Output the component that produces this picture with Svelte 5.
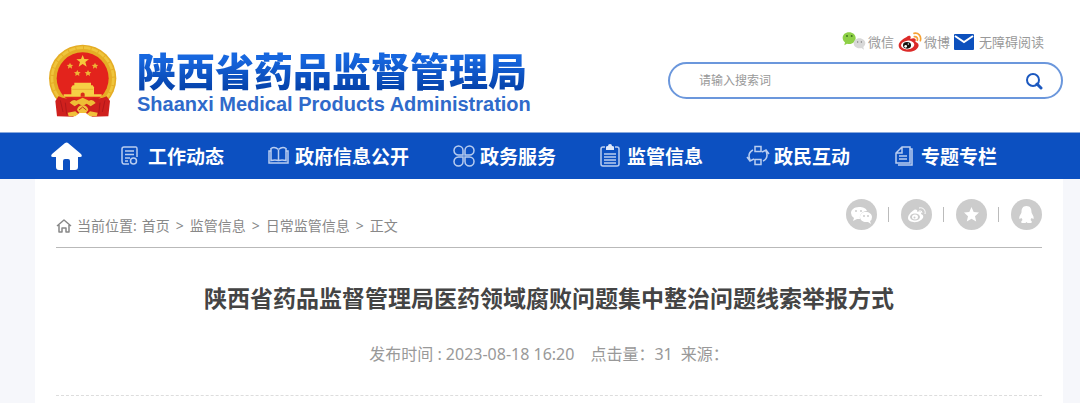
<script>
	let keyword = $state('');

	const nav_list = [
		{ label: '工作动态', icon: 'doc' },
		{ label: '政府信息公开', icon: 'book' },
		{ label: '政务服务', icon: 'clover' },
		{ label: '监管信息', icon: 'clipboard' },
		{ label: '政民互动', icon: 'exchange' },
		{ label: '专题专栏', icon: 'pages' }
	];

	const crumb_list = ['首页', '监管信息', '日常监管信息', '正文'];

	const share_list = [
		{ label: '分享到微信', icon: 'wechat' },
		{ label: '分享到微博', icon: 'weibo' },
		{ label: '收藏', icon: 'star' },
		{ label: '分享到QQ', icon: 'qq' }
	];
</script>

<header class="site_head">
	<a class="brand" href="/">
		<svg class="emblem" viewBox="24 24 210 222" aria-hidden="true">
			<circle cx="128" cy="130" r="101" fill="#e5ad25" />
			<circle cx="128" cy="130" r="92" fill="none" stroke="#efc53c" stroke-width="8" stroke-dasharray="20 3" />
			<circle cx="128" cy="130" r="78" fill="#e3231c" />
			<path d="M128 60l5 12 14 1-11 8 4 14-12-8-12 8 4-14-11-8 14-1z" fill="#f5c83b" />
			<g fill="#eeb436">
				<path id="star" d="M90 83l3 6 7 1-5 4 1 7-6-4-6 4 1-7-5-4 7-1z" />
				<use href="#star" x="75" />
				<use href="#star" x="22" y="22" />
				<use href="#star" x="54" y="22" />
			</g>
			<path d="M103 143h50v8h-50zM98 151h60l5 7H93zM94 158h68v20H94zM71 178h114v7H71z" fill="#f6cf45" />
			<path d="M97 163h62" stroke="#e4a12a" stroke-width="2" />
			<path d="M122 185v-9q6-7 12 0v9z" fill="#d82b1b" />
			<path d="M56 184q18 10 38 4l34 12 34-12q20 6 38-4l10 14-5 46-48 1-29-16-29 16-48-1-5-46z" fill="#cf201d" />
			<path d="M61 196l8 35M76 203l4 35M195 196l-8 35M180 203l-4 35" stroke="#b1171a" stroke-width="3" />
			<path d="M89 203q10-12 20-6l19-9 19 9q11-6 20 7l-15 10-12-8-12 7-12-7-12 8z" fill="#eebc35" />
			<path d="M111 225q3-14 17-14t17 14l-7 9h-20zM83 233l23-4 9 8-9 7H86zM173 233l-23-4-9 8 9 7h20z" fill="#f1c03b" />
			<path d="M117 225l11-9 11 9" fill="none" stroke="#c33320" stroke-width="3" />
		</svg>
		<span class="brand_text">
			<span class="brand_cn">陕西省药品监督管理局</span>
			<span class="brand_en">Shaanxi Medical Products Administration</span>
		</span>
	</a>

	<div class="head_tools">
		<div class="quick_links">
			<a href="#wechat">
				<svg width="24" height="20" viewBox="22 19 72 60" aria-hidden="true">
					<path d="M43 20c-11 0-19 7-19 17 0 5 3 10 7 13l-2 9 8-5q3 1 7 1c11 0 19-8 19-18s-9-17-20-17z" fill="#8ed047" />
					<path d="M74 38c-10 0-17 7-17 15s7 15 17 15q3 0 6-1l8 5-2-8q6-4 6-11c0-8-8-15-18-15z" fill="#d8d8d8" />
					<circle cx="37" cy="31" r="3" fill="#3e751d" />
					<circle cx="51" cy="31" r="3" fill="#3e751d" />
					<circle cx="69" cy="49" r="2" fill="#777" />
					<circle cx="80" cy="49" r="2" fill="#777" />
				</svg>
				<span>微信</span>
			</a>
			<a href="#weibo">
				<svg width="24" height="20" viewBox="190 18 72 60" aria-hidden="true">
					<path d="M216 33c5-5 13-5 12 2l-1 4c9-4 18-3 16 5l-1 3c8 3 12 8 9 15-4 10-18 16-32 15-17-1-28-9-27-20 1-9 13-19 24-24z" fill="#dc2b29" />
					<ellipse cx="219" cy="57" rx="20" ry="13" fill="#fff" transform="rotate(-7 219 57)" />
					<ellipse cx="217" cy="58" rx="12" ry="10" fill="#17120f" />
					<circle cx="213" cy="61" r="4" fill="#fff" />
					<circle cx="221" cy="54" r="2" fill="#fff" />
					<path d="M238 22c13-3 23 8 19 22M239 32c7-1 11 5 9 11" fill="none" stroke="#f6a135" stroke-width="5" stroke-linecap="round" />
				</svg>
				<span>微博</span>
			</a>
			<a class="link_mail" href="#accessible">
				<svg width="20" height="16" viewBox="0 0 20 16" aria-hidden="true">
					<rect width="20" height="16" rx="1" fill="#0c50bd" />
					<path d="M1 2l9 6 9-6" fill="none" stroke="#fff" stroke-width="2" />
				</svg>
				<span>无障碍阅读</span>
			</a>
		</div>

		<form class="search" role="search" onsubmit={(e) => e.preventDefault()}>
			<input type="text" aria-label="搜索" placeholder="请输入搜索词" bind:value={keyword} />
			<button type="submit" aria-label="搜索">
				<svg width="18" height="18" viewBox="0 0 18 18" aria-hidden="true">
					<circle cx="8" cy="8" r="6" fill="none" stroke="#1b58bf" stroke-width="2" />
					<path d="M12 12l4 4" stroke="#1b58bf" stroke-width="3" stroke-linecap="round" />
				</svg>
			</button>
		</form>
	</div>
</header>

<nav class="main_nav">
	<a class="nav_home" href="/" aria-label="首页">
		<svg width="31" height="28" viewBox="0 0 31 28" aria-hidden="true">
			<path d="M14 1q2-1 3 0l13 11q2 3-1 3h-2v10q0 3-3 3h-5v-9q0-2-2-2h-3q-2 0-2 2v9H8q-3 0-3-3V15H2q-3 0-1-3z" fill="#fff" />
		</svg>
	</a>
	{#each nav_list as nav_item (nav_item.label)}
		<a class="nav_item" href="#{nav_item.icon}">
			<svg width="22" height="24" viewBox="0 0 22 24" aria-hidden="true">
				{#if nav_item.icon === 'doc'}
					<path d="M9 20H4q-2 0-2-3V5q0-2 2-2h12q1 0 1 2v8M5 7h9M5 10.500h9M5 14h5M5 17h3" />
					<circle cx="13.500" cy="17" r="3" />
				{:else if nav_item.icon === 'book'}
					<path d="M11.500 6v10M11.500 5.500Q7.500 2 4 4.500v12q4-1 7.500 0 3.500-1 7.500 0v-12q-3.500-2.500-7.500 1M4 7H2v12h19V7h-2M8 19h7" />
				{:else if nav_item.icon === 'clover'}
					<path d="M11 11H6.500A4.500 4.500 0 1 1 11 6.500zM13 11h4.500A4.500 4.500 0 1 0 13 6.500zM11 13H6.500a4.500 4.500 0 1 0 4.500 4.500zM13 13h4.500a4.500 4.500 0 1 1-4.500 4.500z" />
				{:else if nav_item.icon === 'clipboard'}
					<path d="M6 3H4Q2 3 2 5v15q0 2 2 2h14q2 0 2-2V5q0-2-2-2h-2M5 10h12M5 13h12M5 16h12M5 19h12" />
					<path class="solid" d="M7 6V3q0-1 2-1 0-2 2-2t2 2q2 0 2 1v3z" />
				{:else if nav_item.icon === 'exchange'}
					<path d="M9 2.500h6v5H9zM9 15.500h6v5H9zM7 6q-6 3-3 10M1 13l3 4 4-2M17 17q6-3 3-10M23 10l-3-4-4 2" />
				{:else}
					<path d="M9 3h8v16H3V9zM9 3v6H3M6 12h8M6 15h8M17 5h2v16H5" />
				{/if}
			</svg>
			<span>{nav_item.label}</span>
		</a>
	{/each}
</nav>

<main class="article">
	<div class="article_bar">
		<div class="crumbs">
			<svg width="16" height="16" viewBox="0 0 16 16" aria-hidden="true">
				<path d="M1 8l7-6 7 6M3 7v7h3v-4h4v4h3V7" fill="none" stroke="#888" stroke-width="1.500" stroke-linejoin="round" />
			</svg>
			<span>当前位置:</span>
			{#each crumb_list as crumb, i (crumb)}
				{#if i > 0}<span class="crumb_sep">&gt;</span>{/if}
				<a href="#crumb-{i}">{crumb}</a>
			{/each}
		</div>

		<div class="share">
			{#each share_list as share_item (share_item.icon)}
				<button type="button" aria-label={share_item.label}>
					<svg width="31" height="31" viewBox="0 0 31 31" aria-hidden="true">
						{#if share_item.icon === 'wechat'}
							<path d="M13 8c-5 0-8 3-8 6q0 3 3 5l-1 3 4-2h3c-1-5 3-8 7-8-1-3-4-4-8-4z" />
							<path d="M20 13c-4 0-6 2-6 5s3 5 6 5h2l3 2-1-3q2-1 2-4c0-3-3-5-6-5z" />
							<g class="dot"><circle cx="10" cy="12" r="1" /><circle cx="15" cy="12" r="1" /><circle cx="18" cy="17" r="1" /><circle cx="22" cy="17" r="1" /></g>
						{:else if share_item.icon === 'weibo'}
							<path d="M13 11c2-1 4 0 3 2 3-1 5 0 4 2 3 1 3 4 0 6-5 4-13 2-13-2 0-3 3-6 6-8z" />
							<ellipse class="dot" cx="14" cy="18" rx="5" ry="3.500" />
							<ellipse cx="14" cy="18" rx="3" ry="2.500" />
							<circle class="dot" cx="13.500" cy="18.500" r="1" />
							<path class="wave" d="M18 9c4-1 7 2 6 6M18 12q3-1 3 2" />
						{:else if share_item.icon === 'star'}
							<path d="M15.500 8l2.200 5 5.300.500-4 3.700 1.200 5.300-4.700-2.800-4.700 2.800 1.200-5.300-4-3.700 5.300-.500z" />
						{:else}
							<path d="M15.500 7c-4 0-5 3-5 6 0 2-3 4-2 7l2-1 1 2q-2 1-1 3h4l1-1 1 1h4q1-2-1-3l1-2 2 1c1-3-2-5-2-7 0-3-1-6-5-6z" />
						{/if}
					</svg>
				</button>
			{/each}
		</div>
	</div>

	<h1>陕西省药品监督管理局医药领域腐败问题集中整治问题线索举报方式</h1>
	<p class="meta">
		<span>发布时间 : 2023-08-18 16:20</span>
		<span>点击量：31</span>
		<span>来源：</span>
	</p>
</main>

<style>
	:global(body) {
		margin: 0;
		background: #f6f7fb;
		font-family: 'Noto Sans', 'Noto Sans CJK SC', sans-serif;
	}

	a {
		color: inherit;
		text-decoration: none;
	}

	button {
		padding: 0;
		border: 0;
		background: none;
		cursor: pointer;
	}

	svg {
		display: block;
		flex: none;
	}

	.site_head {
		display: flex;
		justify-content: space-between;
		align-items: flex-start;
		padding: 32px 17px 15px 48px;
		background: #fff;
	}

	.brand {
		display: flex;
		gap: 19px;
		padding-top: 11px;
	}

	.emblem {
		width: 70px;
		height: 74px;
	}

	.brand_text {
		display: flex;
		flex-direction: column;
		padding-top: 9px;
		white-space: nowrap;
	}

	.brand_cn {
		font-family: 'Liberation Sans', 'Noto Sans CJK SC', sans-serif;
		font-size: 39px;
		font-weight: 900;
		line-height: 42px;
		background: linear-gradient(#1767df 15%, #0644ad 85%);
		background-clip: text;
		color: transparent;
	}

	.brand_en {
		font-family: 'Liberation Sans', Arial, sans-serif;
		font-size: 20px;
		font-weight: 700;
		line-height: 20px;
		color: #2f6aca;
	}

	.head_tools {
		width: 395px;
	}

	.quick_links {
		display: flex;
		justify-content: flex-end;
		gap: 4px;
		padding-right: 19px;
		margin-bottom: 10px;
		font-size: 13px;
		line-height: 20px;
		color: #999;
	}

	.quick_links a {
		display: flex;
		align-items: center;
		gap: 2px;
	}

	.quick_links .link_mail {
		gap: 5px;
	}

	.search {
		display: flex;
		align-items: center;
		box-sizing: border-box;
		height: 37px;
		padding: 0 18px 0 29px;
		border: 2px solid #6b97dc;
		border-radius: 19px;
	}

	.search input {
		flex: 1;
		min-width: 0;
		padding: 0;
		border: 0;
		outline: 0;
		background: none;
		font: inherit;
		font-size: 12px;
	}

	.search input::placeholder {
		color: #999;
	}

	.main_nav {
		display: flex;
		align-items: center;
		height: 46px;
		padding-left: 51px;
		border-top: 1px solid #89a9dd;
		background: #0c50c1;
		color: #fff;
		font-size: 19px;
		font-weight: 700;
		white-space: nowrap;
	}

	.nav_home {
		margin-right: 38px;
	}

	.nav_item {
		display: flex;
		align-items: center;
		gap: 6px;
		margin-right: 43px;
	}

	.nav_item svg {
		overflow: visible;
	}

	.nav_item path,
	.nav_item circle {
		fill: none;
		stroke: #b9cdf0;
		stroke-width: 1.5;
	}

	.nav_item .solid {
		fill: #dfe9fa;
		stroke: none;
	}

	.article {
		margin: 0 17px 0 35px;
		padding: 0 21px 7px;
		background: #fff;
	}

	.article_bar {
		display: flex;
		justify-content: space-between;
		align-items: flex-start;
		border-bottom: 1px solid #b9b9b9;
	}

	.crumbs {
		display: flex;
		align-items: center;
		gap: 5px;
		padding: 37px 0 11px;
		font-size: 14px;
		line-height: 20px;
		color: #888;
	}

	.crumb_sep {
		padding: 0 1px;
	}

	.share {
		display: flex;
		padding-top: 20px;
	}

	.share button {
		display: flex;
		align-items: center;
	}

	.share button + button::before {
		content: '';
		width: 1px;
		height: 15px;
		margin: 0 12px 0 11px;
		background: #bbb;
	}

	.share svg {
		border-radius: 50%;
		background: #ccc;
		fill: #fff;
	}

	.share .dot {
		fill: #ccc;
	}

	.share .wave {
		fill: none;
		stroke: #fff;
	}

	h1 {
		margin: 34px 0 28px;
		font-size: 23px;
		line-height: 32px;
		text-align: center;
		color: #444;
	}

	.meta {
		display: flex;
		justify-content: center;
		gap: 8px;
		margin: 0;
		padding-bottom: 29px;
		border-bottom: 1px dashed #ddd;
		font-size: 16px;
		line-height: 24px;
		color: #999;
	}

	.meta span:first-child {
		margin-right: 8px;
	}
</style>
